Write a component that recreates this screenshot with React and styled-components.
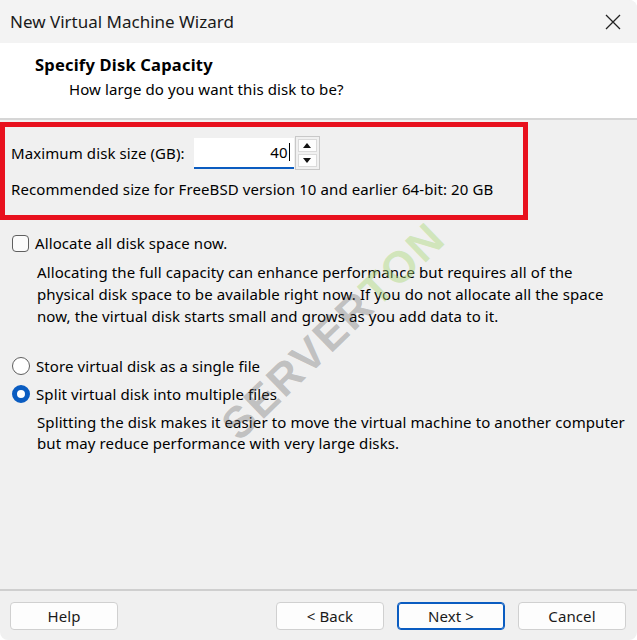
import React from "react";
import styled, { createGlobalStyle } from "styled-components";

const GlobalStyle = createGlobalStyle`
  html, body {
    margin: 0;
    padding: 0;
    background: #ffffff;
  }
  body {
    font-family: "Noto Sans", "Open Sans", sans-serif;
    color: #000;
  }
`;

const Window = styled.div`
  position: relative;
  width: 637px;
  height: 640px;
  display: flex;
  flex-direction: column;
  background: #f0f0f0;
  border-radius: 0 8px 8px 8px;
  overflow: hidden;
  font-size: 15px;
  letter-spacing: 0.1px;
`;

const TitleBar = styled.div`
  height: 43px;
  flex-shrink: 0;
  display: flex;
  align-items: center;
  justify-content: space-between;
  padding: 0 12px 0 10px;
  background: #f3f3f3;
  font-size: 17px;
  letter-spacing: 0;
  color: #1a1a1a;
`;

const CloseButton = styled.div`
  width: 24px;
  height: 24px;
  display: flex;
  align-items: center;
  justify-content: center;
`;

const Header = styled.div`
  height: 77px;
  flex-shrink: 0;
  background: #ffffff;
  border-bottom: 2px solid #d6d6d6;
  padding: 9px 0 0 35px;
  box-sizing: border-box;
`;

const HeaderTitle = styled.div`
  font-weight: 700;
  font-size: 16.5px;
  letter-spacing: 0.2px;
  line-height: 25px;
`;

const HeaderSub = styled.div`
  padding-left: 34px;
  line-height: 24px;
`;

const Highlight = styled.div`
  margin-top: 2px;
  width: 528px;
  height: 98px;
  box-sizing: border-box;
  border: 5px solid #e8111e;
  padding: 9px 0 0 6px;
  display: flex;
  flex-direction: column;
  gap: 9px;
`;

const SizeRow = styled.div`
  display: flex;
  align-items: center;
  gap: 9px;
`;

const NumberBox = styled.div`
  display: flex;
  align-items: center;
  gap: 1px;
`;

const NumberInput = styled.div`
  width: 100px;
  height: 31px;
  box-sizing: border-box;
  background: #fff;
  border-bottom: 2px solid #0b5cc0;
  display: flex;
  align-items: center;
  justify-content: flex-end;
  padding-right: 4px;
  font-size: 15px;
`;

const Caret = styled.span`
  display: inline-block;
  width: 1px;
  height: 18px;
  background: #000;
  margin-left: 1px;
`;

const Spinner = styled.div`
  width: 25px;
  height: 34px;
  box-sizing: border-box;
  border: 1px solid #c8c8c8;
  background: #f0f0f0;
  display: flex;
  flex-direction: column;
  gap: 2px;
  padding: 2px;
`;

const SpinBtn = styled.div`
  flex: 1;
  background: #fdfdfd;
  border: 1px solid #dadada;
  display: flex;
  align-items: center;
  justify-content: center;
`;

const Options = styled.div`
  padding: 11px 0 0 12px;
  display: flex;
  flex-direction: column;
`;

const OptionRow = styled.label`
  display: flex;
  align-items: center;
  gap: 6px;
  height: 24px;
  margin-top: ${({ $top }) => $top || 0}px;
`;

const Checkbox = styled.span`
  width: 17px;
  height: 17px;
  box-sizing: border-box;
  border: 1.5px solid #5f5f5f;
  border-radius: 4px;
  background: #fbfbfb;
`;

const Radio = styled.span`
  width: 18px;
  height: 18px;
  box-sizing: border-box;
  border-radius: 50%;
  border: ${({ $checked }) => ($checked ? "5px solid #0a5cc1" : "1.5px solid #5f5f5f")};
  background: #fff;
`;

const Note = styled.p`
  margin: ${({ $top }) => $top || 6}px 0 0 25px;
  line-height: ${({ $lh }) => $lh || 22}px;
  white-space: nowrap;
`;

const Spacer = styled.div`
  flex: 1;
`;

const Footer = styled.div`
  border-top: 2px solid #cfcfcf;
  height: 51px;
  flex-shrink: 0;
  box-sizing: border-box;
  display: flex;
  align-items: center;
  padding: 0 11px 0 10px;
  gap: 13px;
`;

const Button = styled.button`
  width: 108px;
  height: 28px;
  box-sizing: border-box;
  border-radius: 4px;
  background: #fdfdfd;
  border: 1px solid ${({ $primary }) => ($primary ? "#0a5cc1" : "#d0d0d0")};
  box-shadow: ${({ $primary }) => ($primary ? "inset 0 0 0 1px #0a5cc1" : "none")};
  font-family: "Noto Sans", "Open Sans", sans-serif;
  font-size: 15px;
  letter-spacing: 0.1px;
  color: #1a1a1a;
  padding: 0;
  margin-left: ${({ $push }) => ($push ? "auto" : "0")};
`;

const Watermark = styled.div`
  position: absolute;
  left: 188px;
  top: 306px;
  transform: rotate(-44deg);
  font-family: "Liberation Sans", sans-serif;
  font-weight: 700;
  font-size: 44px;
  letter-spacing: 2px;
  color: rgba(90, 90, 90, 0.33);
  pointer-events: none;
  white-space: nowrap;
`;

const WmAccent = styled.span`
  color: rgba(170, 215, 120, 0.45);
`;

export default function App() {
  return (
    <>
      <GlobalStyle />
      <Window>
        <TitleBar>
          <span>New Virtual Machine Wizard</span>
          <CloseButton>
            <svg width="18" height="18" viewBox="0 0 18 18">
              <path d="M2 2 L16 16 M16 2 L2 16" stroke="#222" strokeWidth="1.3" />
            </svg>
          </CloseButton>
        </TitleBar>
        <Header>
          <HeaderTitle>Specify Disk Capacity</HeaderTitle>
          <HeaderSub>How large do you want this disk to be?</HeaderSub>
        </Header>
        <Highlight>
          <SizeRow>
            <span>Maximum disk size (GB):</span>
            <NumberBox>
              <NumberInput>
                40<Caret />
              </NumberInput>
              <Spinner>
                <SpinBtn>
                  <svg width="8" height="5" viewBox="0 0 8 5">
                    <path d="M0 5 L4 0 L8 5 Z" fill="#111" />
                  </svg>
                </SpinBtn>
                <SpinBtn>
                  <svg width="8" height="5" viewBox="0 0 8 5">
                    <path d="M0 0 L4 5 L8 0 Z" fill="#111" />
                  </svg>
                </SpinBtn>
              </Spinner>
            </NumberBox>
          </SizeRow>
          <div>Recommended size for FreeBSD version 10 and earlier 64-bit: 20 GB</div>
        </Highlight>
        <Options>
          <OptionRow>
            <Checkbox />
            <span>Allocate all disk space now.</span>
          </OptionRow>
          <Note>
            Allocating the full capacity can enhance performance but requires all of the
            <br />
            physical disk space to be available right now. If you do not allocate all the space
            <br />
            now, the virtual disk starts small and grows as you add data to it.
          </Note>
          <OptionRow $top={27}>
            <Radio />
            <span>Store virtual disk as a single file</span>
          </OptionRow>
          <OptionRow $top={4}>
            <Radio $checked />
            <span>Split virtual disk into multiple files</span>
          </OptionRow>
          <Note $top={6} $lh={21}>
            Splitting the disk makes it easier to move the virtual machine to another computer
            <br />
            but may reduce performance with very large disks.
          </Note>
        </Options>
        <Spacer />
        <Footer>
          <Button>Help</Button>
          <Button $push>&lt; Back</Button>
          <Button $primary>Next &gt;</Button>
          <Button>Cancel</Button>
        </Footer>
        <Watermark>
          SERVER<WmAccent>TON</WmAccent>
        </Watermark>
      </Window>
    </>
  );
}
